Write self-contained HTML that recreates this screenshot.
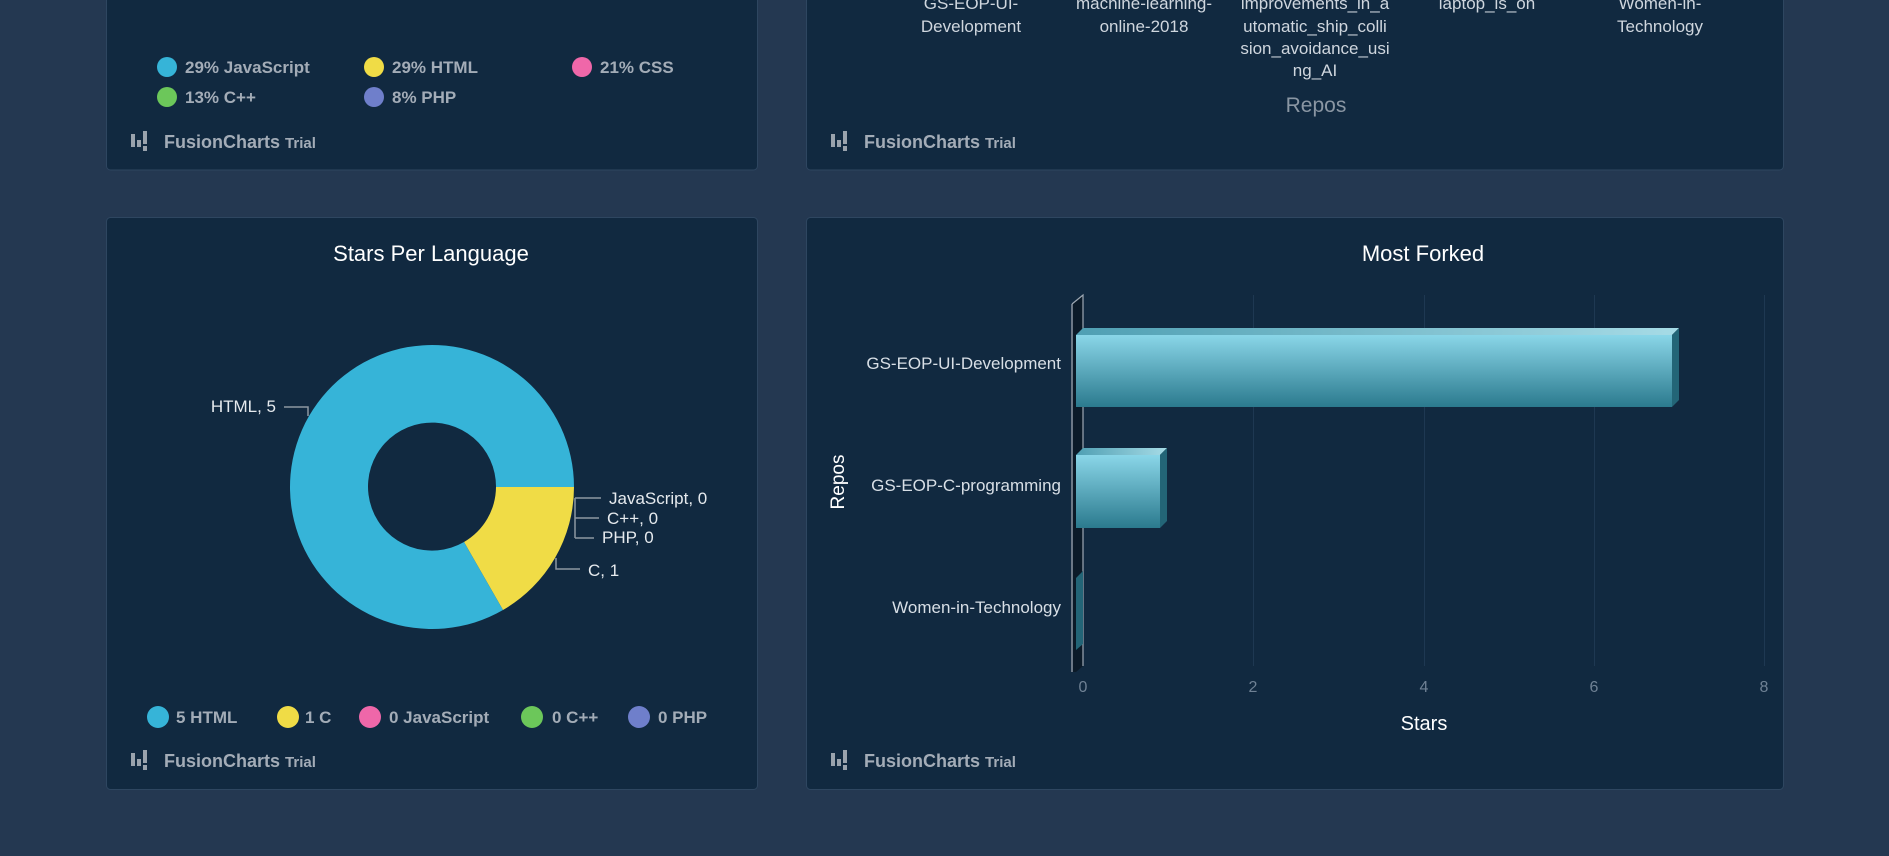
<!DOCTYPE html>
<html><head><meta charset="utf-8"><style>
html,body{margin:0;padding:0;background:#243851;width:1889px;height:856px;overflow:hidden}
svg{display:block}
text{font-family:"Liberation Sans",sans-serif}
</style></head><body>
<svg width="1889" height="856" viewBox="0 0 1889 856" xmlns="http://www.w3.org/2000/svg">
<defs>
<linearGradient id="bf" x1="0" y1="0" x2="0" y2="1"><stop offset="0" stop-color="#8ad6e8"/><stop offset="1" stop-color="#2b7a8e"/></linearGradient>
<linearGradient id="bt" x1="0" y1="0" x2="1" y2="0"><stop offset="0" stop-color="#4f9fb3"/><stop offset="1" stop-color="#a6dbe6"/></linearGradient>
<g id="fc"><rect x="0" y="0" width="4" height="13" fill="#9aa3ad"/><rect x="6" y="6" width="4" height="7" fill="#9aa3ad"/><rect x="12" y="-3" width="4" height="13" fill="#9aa3ad"/><rect x="12" y="12" width="4" height="5" fill="#9aa3ad"/></g>
</defs>
<rect x="106.5" y="-10" width="651" height="180" rx="4" fill="#112940" stroke="#2e4660"/>
<rect x="806.5" y="-10" width="977" height="180" rx="4" fill="#112940" stroke="#2e4660"/>
<rect x="106.5" y="217.5" width="651" height="572" rx="4" fill="#112940" stroke="#2e4660"/>
<rect x="806.5" y="217.5" width="977" height="572" rx="4" fill="#112940" stroke="#2e4660"/>

<g font-size="17" font-weight="bold" fill="#a3acb7">
<circle cx="167" cy="67" r="10" fill="#36b4d8"/><text x="185" y="73">29% JavaScript</text>
<circle cx="374" cy="67" r="10" fill="#f0dc46"/><text x="392" y="73">29% HTML</text>
<circle cx="582" cy="67" r="10" fill="#ef67a9"/><text x="600" y="73">21% CSS</text>
<circle cx="167" cy="97" r="10" fill="#6cc75a"/><text x="185" y="103">13% C++</text>
<circle cx="374" cy="97" r="10" fill="#6f7fcb"/><text x="392" y="103">8% PHP</text>
</g>
<use href="#fc" x="131" y="134"/>
<text x="164" y="148" font-size="18" font-weight="bold" fill="#a3acb7">FusionCharts <tspan font-size="15">Trial</tspan></text>

<g font-size="17" fill="#cfd6de" text-anchor="middle">
<text x="971" y="9">GS-EOP-UI-</text><text x="971" y="32">Development</text>
<text x="1144" y="9">machine-learning-</text><text x="1144" y="32">online-2018</text>
<text x="1315" y="9">improvements_in_a</text><text x="1315" y="32">utomatic_ship_colli</text><text x="1315" y="54">sion_avoidance_usi</text><text x="1315" y="76">ng_AI</text>
<text x="1487" y="9">laptop_is_on</text>
<text x="1660" y="9">Women-in-</text><text x="1660" y="32">Technology</text>
</g>
<text x="1316" y="112" font-size="21" fill="#8a96a3" text-anchor="middle">Repos</text>
<use href="#fc" x="831" y="134"/>
<text x="864" y="148" font-size="18" font-weight="bold" fill="#a3acb7">FusionCharts <tspan font-size="15">Trial</tspan></text>

<text x="431" y="261" font-size="22" fill="#ffffff" text-anchor="middle">Stars Per Language</text>
<path d="M574,487 A142,142 0 0 1 503,610 L464,542 A64,64 0 0 0 496,487 Z" fill="#f0dc46"/>
<path d="M574,487 A142,142 0 1 0 503,610 L464,542 A64,64 0 1 1 496,487 Z" fill="#36b4d8"/>
<g fill="none" stroke="#8e97a1" stroke-width="1.5">
<path d="M284,407 H308 V416"/>
<path d="M575,498 H601 M575,518 H599 M575,538 H594 M575,498 V538"/>
<path d="M556,558 V569 H580"/>
</g>
<g font-size="17" fill="#e6eaee">
<text x="276" y="412" text-anchor="end">HTML, 5</text>
<text x="609" y="504">JavaScript, 0</text>
<text x="607" y="524">C++, 0</text>
<text x="602" y="543">PHP, 0</text>
<text x="588" y="576">C, 1</text>
</g>
<g font-size="17" font-weight="bold" fill="#a3acb7">
<circle cx="158" cy="717" r="11" fill="#36b4d8"/><text x="176" y="723">5 HTML</text>
<circle cx="288" cy="717" r="11" fill="#f0dc46"/><text x="305" y="723">1 C</text>
<circle cx="370" cy="717" r="11" fill="#ef67a9"/><text x="389" y="723">0 JavaScript</text>
<circle cx="532" cy="717" r="11" fill="#6cc75a"/><text x="552" y="723">0 C++</text>
<circle cx="639" cy="717" r="11" fill="#6f7fcb"/><text x="658" y="723">0 PHP</text>
</g>
<use href="#fc" x="131" y="753"/>
<text x="164" y="767" font-size="18" font-weight="bold" fill="#a3acb7">FusionCharts <tspan font-size="15">Trial</tspan></text>

<text x="1423" y="261" font-size="22" fill="#ffffff" text-anchor="middle">Most Forked</text>
<g stroke="#1e3852" stroke-width="1">
<line x1="1253.5" y1="295" x2="1253.5" y2="666"/><line x1="1424.5" y1="295" x2="1424.5" y2="666"/>
<line x1="1594.5" y1="295" x2="1594.5" y2="666"/><line x1="1764.5" y1="295" x2="1764.5" y2="666"/>
</g>
<path d="M1072,304 L1083,295 L1083,666 L1076,672 L1072,672 Z" fill="#0b1a28"/>
<path d="M1072,304 L1072,672" stroke="#6c7886" stroke-width="2"/>
<path d="M1072,304 L1083,295 L1083,666" fill="none" stroke="#9ea8b3" stroke-width="1.2"/>
<path d="M1076,335 L1083,328 L1679,328 L1672,335 Z" fill="url(#bt)"/>
<rect x="1076" y="335" width="596" height="72" fill="url(#bf)"/>
<path d="M1672,335 L1679,328 L1679,400 L1672,407 Z" fill="#236577"/>
<path d="M1076,455 L1083,448 L1167,448 L1160,455 Z" fill="url(#bt)"/>
<rect x="1076" y="455" width="84" height="73" fill="url(#bf)"/>
<path d="M1160,455 L1167,448 L1167,521 L1160,528 Z" fill="#236577"/>
<path d="M1076,578 L1083,571 L1083,644 L1076,650 Z" fill="#236577"/>
<g font-size="17" fill="#d8dfe6" text-anchor="end">
<text x="1061" y="369">GS-EOP-UI-Development</text>
<text x="1061" y="491">GS-EOP-C-programming</text>
<text x="1061" y="613">Women-in-Technology</text>
</g>
<g font-size="16" fill="#6f8194" text-anchor="middle">
<text x="1083" y="692">0</text><text x="1253" y="692">2</text><text x="1424" y="692">4</text><text x="1594" y="692">6</text><text x="1764" y="692">8</text>
</g>
<text x="1424" y="730" font-size="20" fill="#ffffff" text-anchor="middle">Stars</text>
<text transform="translate(844,482) rotate(-90)" font-size="19" fill="#ffffff" text-anchor="middle">Repos</text>
<use href="#fc" x="831" y="753"/>
<text x="864" y="767" font-size="18" font-weight="bold" fill="#a3acb7">FusionCharts <tspan font-size="15">Trial</tspan></text>
</svg>
</body></html>
